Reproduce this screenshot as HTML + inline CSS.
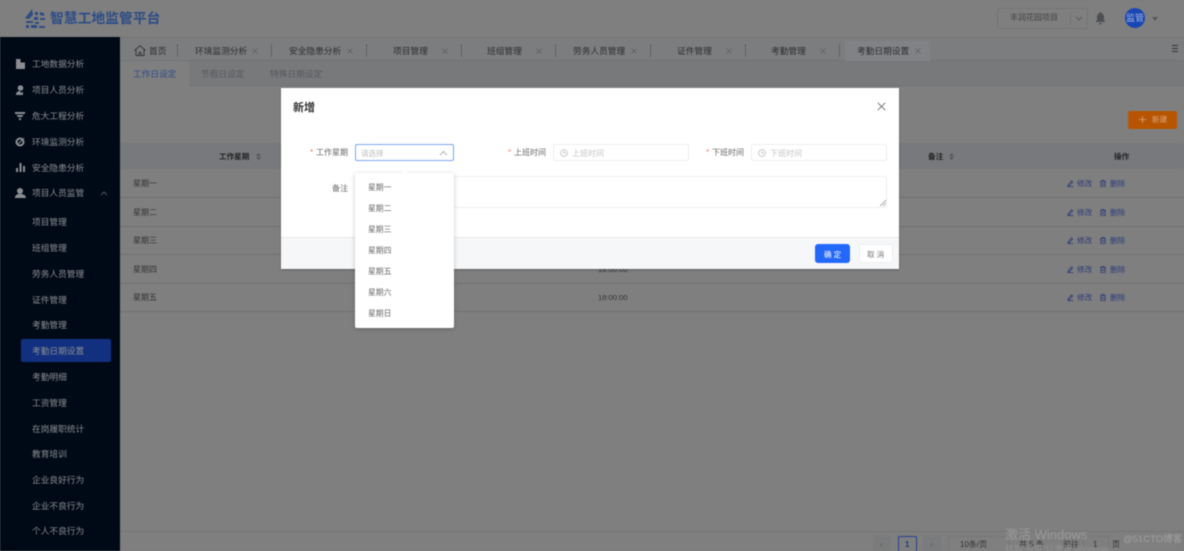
<!DOCTYPE html>
<html lang="zh"><head><meta charset="utf-8"><title>智慧工地监管平台</title>
<style>
html,body{margin:0;padding:0;width:1184px;height:551px;overflow:hidden;background:#7f7f7f}
#p{position:relative;width:1184px;height:551px;overflow:hidden;background:#7f7f7f;font-family:"Liberation Sans","Noto Sans CJK SC",sans-serif;font-size:8.7px;filter:blur(.45px)}
#p div,#p span,#p svg{position:absolute}
.t{white-space:nowrap;line-height:12px;height:12px;margin-top:-6px}
.s{color:#8b8e91;left:32px}
.tab{color:#2e2e2e}
.sep{width:1px;height:13px;top:44px;background:#5f6164}
.r{left:120px;width:1064px;height:1px;background:#6f7072}
.a{color:#2c3a78;font-size:7.6px;margin-top:-5px}
.w{color:#333;left:133px;font-size:8px;margin-top:-5px}
.m{color:#666;font-size:8px;margin-top:-5px}
.d{color:#666;left:368px;font-size:7.8px;margin-top:-5px}
.tm{color:#333;font-size:7.6px;left:598px;margin-top:-5px}
.th{color:#222;font-weight:700;font-size:7.6px;margin-top:-5px}
.ph{margin-top:-5px}
.box{background:#fff;border:1px solid #eceef1;box-sizing:border-box;border-radius:2px}
.cx{top:48px}
.ip{fill:none;stroke:#2c3a78;stroke-width:.8}
</style></head><body><div id="p">
<!-- header -->
<div style="left:0;top:0;width:1184px;height:37px;background:#7f7f7f;border-bottom:1px solid #737475"></div>
<svg style="left:25px;top:9px" width="20" height="20" viewBox="0 0 20 20" fill="#2c4c86"><path d="M0 9 5 3 7 0 8 6 4 10ZM10 3h3v3h-3zM15 3l4 1v3l-4-1zM9 8h4v3H9zM15 9h5v2h-5zM1 12h7v2H1zM10 13h4v2h-4zM1 16h3v3H1zM6 16h6v3H6zM14 17h6v2h-6z"/></svg>
<div class="t" style="left:50px;top:19px;height:18px;line-height:18px;margin-top:-9px;font-size:13.8px;font-weight:700;color:#2c4c86">智慧工地监管平台</div>
<div style="left:997px;top:8px;width:91px;height:21px;box-sizing:border-box;border:1px solid #747576;border-radius:3px"></div>
<div style="left:1070px;top:12px;width:1px;height:13px;background:#747576"></div>
<div class="t" style="left:1010px;top:18px;color:#444;font-size:8px">丰润花园项目</div>
<svg style="left:1075px;top:16px" width="8" height="5" viewBox="0 0 8 5" fill="none" stroke="#5c5c5c"><path d="M1 1l3 3 3-3"/></svg>
<svg style="left:1095px;top:12px" width="11" height="13" viewBox="0 0 11 13" fill="#4d5055"><path d="M5.500 0C6.300 0 6.500.6 6.500 1.200 8.500 1.800 9 3.500 9 5.500V8l1.500 2H.5L2 8V5.500C2 3.500 2.500 1.800 4.500 1.200 4.500.6 4.700 0 5.500 0ZM4 11h3a1.500 1.500 0 0 1-3 0Z"/></svg>
<div style="left:1125px;top:8px;width:20px;height:20px;border-radius:50%;background:#1846b4"></div>
<div class="t" style="left:1126px;top:18px;color:#a9b5d8;font-size:9px">监管</div>
<div style="left:1152px;top:17px;width:0;height:0;border:3px solid transparent;border-top:4px solid #55575a"></div>
<!-- sidebar -->
<div style="left:0;top:37px;width:120px;height:514px;background:#000a17"></div>
<svg style="left:16px;top:59px" width="9" height="10" viewBox="0 0 9 10" fill="#8b8e91"><path d="M0 0h4.500v3.500H9V10H0z"/></svg>
<svg style="left:16px;top:85px" width="9" height="10" viewBox="0 0 9 10" fill="#8b8e91"><circle cx="4.500" cy="3" r="2.800"/><path d="M0 10c0-3 2-4 4-4l1 2 2-1v3z"/></svg>
<svg style="left:15px;top:112px" width="10" height="8" viewBox="0 0 10 8" fill="#8b8e91"><path d="M0 0h10v2H0zM1.500 3h7L7 5H3zM4 6h2v2H4z"/></svg>
<svg style="left:15px;top:137px" width="10" height="10" viewBox="0 0 10 10" fill="none" stroke="#8b8e91" stroke-width="2"><circle cx="5" cy="5" r="3.500"/><path d="M2 8 9 1" stroke-width="1"/></svg>
<svg style="left:16px;top:163px" width="9" height="9" viewBox="0 0 9 9" fill="#8b8e91"><path d="M0 5h2v4H0zM3.500 0h2v9h-2zM7 3h2v6H7z"/></svg>
<svg style="left:15px;top:188px" width="11" height="10" viewBox="0 0 11 10" fill="#8b8e91"><circle cx="5" cy="3" r="3"/><path d="M0 10c0-3 2-4 5-4s6 1 6 4z"/></svg>
<div class="t s" style="top:64px">工地数据分析</div>
<div class="t s" style="top:90px">项目人员分析</div>
<div class="t s" style="top:116px">危大工程分析</div>
<div class="t s" style="top:142px">环境监测分析</div>
<div class="t s" style="top:168px">安全隐患分析</div>
<div class="t s" style="top:193px">项目人员监管</div>
<svg style="left:100px;top:191px" width="8" height="5" viewBox="0 0 8 5" fill="none" stroke="#4c525a"><path d="M1 4l3-3 3 3"/></svg>
<div class="t s" style="top:222px">项目管理</div>
<div class="t s" style="top:248px">班组管理</div>
<div class="t s" style="top:274px">劳务人员管理</div>
<div class="t s" style="top:300px">证件管理</div>
<div class="t s" style="top:325px">考勤管理</div>
<div style="left:21px;top:339px;width:90px;height:23px;background:#12307f;border-radius:2px"></div>
<div class="t s" style="top:351px">考勤日期设置</div>
<div class="t s" style="top:377px">考勤明细</div>
<div class="t s" style="top:403px">工资管理</div>
<div class="t s" style="top:429px">在岗履职统计</div>
<div class="t s" style="top:454px">教育培训</div>
<div class="t s" style="top:480px">企业良好行为</div>
<div class="t s" style="top:506px">企业不良行为</div>
<div class="t s" style="top:531px">个人不良行为</div>
<!-- tabs -->
<div style="left:120px;top:38px;width:1064px;height:23px;background:#7c7d7f;border-bottom:1px solid #727375;box-sizing:border-box"></div>
<div style="left:845px;top:41px;width:85px;height:20px;background:#808286"></div>
<svg style="left:134px;top:45px" width="12" height="11" viewBox="0 0 12 11" fill="none" stroke="#333" stroke-width=".9"><path d="M.5 5.500 6 .7l5.500 4.800M2 4.500v6h8v-6M5 10.500V7.500h2v3"/></svg>
<div class="t tab" style="left:149px;top:51px">首页</div>
<div class="sep" style="left:177px"></div>
<div class="t tab" style="left:195px;top:51px">环境监测分析</div>
<svg class="cx" style="left:252px" width="6" height="6" viewBox="0 0 6 6" stroke="#5c5c5c" stroke-width=".7"><path d="M.5.500l5 5M5.500.500l-5 5"/></svg>
<div class="sep" style="left:271px"></div>
<div class="t tab" style="left:289px;top:51px">安全隐患分析</div>
<svg class="cx" style="left:347px" width="6" height="6" viewBox="0 0 6 6" stroke="#5c5c5c" stroke-width=".7"><path d="M.5.500l5 5M5.500.500l-5 5"/></svg>
<div class="sep" style="left:366px"></div>
<div class="t tab" style="left:393px;top:51px">项目管理</div>
<svg class="cx" style="left:442px" width="6" height="6" viewBox="0 0 6 6" stroke="#5c5c5c" stroke-width=".7"><path d="M.5.500l5 5M5.500.500l-5 5"/></svg>
<div class="sep" style="left:461px"></div>
<div class="t tab" style="left:487px;top:51px">班组管理</div>
<svg class="cx" style="left:536px" width="6" height="6" viewBox="0 0 6 6" stroke="#5c5c5c" stroke-width=".7"><path d="M.5.500l5 5M5.500.500l-5 5"/></svg>
<div class="sep" style="left:555px"></div>
<div class="t tab" style="left:573px;top:51px">劳务人员管理</div>
<svg class="cx" style="left:631px" width="6" height="6" viewBox="0 0 6 6" stroke="#5c5c5c" stroke-width=".7"><path d="M.5.500l5 5M5.500.500l-5 5"/></svg>
<div class="sep" style="left:650px"></div>
<div class="t tab" style="left:677px;top:51px">证件管理</div>
<svg class="cx" style="left:726px" width="6" height="6" viewBox="0 0 6 6" stroke="#5c5c5c" stroke-width=".7"><path d="M.5.500l5 5M5.500.500l-5 5"/></svg>
<div class="sep" style="left:745px"></div>
<div class="t tab" style="left:771px;top:51px">考勤管理</div>
<svg class="cx" style="left:820px" width="6" height="6" viewBox="0 0 6 6" stroke="#5c5c5c" stroke-width=".7"><path d="M.5.500l5 5M5.500.500l-5 5"/></svg>
<div class="sep" style="left:839px"></div>
<div class="t tab" style="left:857px;top:51px">考勤日期设置</div>
<svg class="cx" style="left:915px" width="6" height="6" viewBox="0 0 6 6" stroke="#5c5c5c" stroke-width=".7"><path d="M.5.500l5 5M5.500.500l-5 5"/></svg>
<div style="left:1172px;top:45px;width:6px;height:5px;border-top:1px solid #333;border-bottom:1px solid #333"></div>
<div style="left:1172px;top:48px;width:6px;height:1px;background:#333"></div>
<!-- sub tabs -->
<div style="left:120px;top:61px;width:1064px;height:25px;background:#78797b;border-bottom:1px solid #727375;box-sizing:border-box"></div>
<div style="left:120px;top:61px;width:69px;height:25px;background:#7f7f7f"></div>
<div class="t" style="left:133px;top:74px;color:#2f4a8c">工作日设定</div>
<div class="t" style="left:201px;top:74px;color:#55585c">节假日设定</div>
<div class="t" style="left:270px;top:74px;color:#55585c">特殊日期设定</div>
<!-- new btn -->
<div style="left:1128px;top:111px;width:49px;height:18px;background:#b85502;border-radius:2px"></div>
<svg style="left:1139px;top:116px" width="7" height="7" viewBox="0 0 7 7" stroke="#dba77d" stroke-width=".8"><path d="M3.500 0v7M0 3.500h7"/></svg>
<div class="t" style="left:1152px;top:120px;color:#dba77d;font-size:7.6px">新建</div>
<!-- table -->
<div style="left:120px;top:143px;width:1064px;height:26px;background:#77797c"></div>
<div class="t th" style="left:219px;top:156px">工作星期</div>
<div class="t th" style="left:928px;top:156px">备注</div>
<div class="t th" style="left:1114px;top:156px">操作</div>
<svg style="left:256px;top:153px" width="5" height="7" viewBox="0 0 5 7" fill="#55585b"><path d="M2.500 0 5 3H0zM0 4h5L2.500 7z"/></svg>
<svg style="left:949px;top:153px" width="5" height="7" viewBox="0 0 5 7" fill="#55585b"><path d="M2.500 0 5 3H0zM0 4h5L2.500 7z"/></svg>
<div class="r" style="top:197px"></div><div class="r" style="top:226px"></div><div class="r" style="top:254px"></div><div class="r" style="top:283px"></div><div class="r" style="top:311px"></div>
<div class="t w" style="top:183px">星期一</div>
<div class="t w" style="top:212px">星期二</div>
<div class="t w" style="top:240px">星期三</div>
<div class="t w" style="top:269px">星期四</div>
<div class="t w" style="top:297px">星期五</div>
<div class="t tm" style="top:269px">18:00:00</div>
<div class="t tm" style="top:297px">18:00:00</div>
<svg style="left:1067px;top:180px" width="7" height="7" viewBox="0 0 7 7"><path class="ip" d="M1 5 4.500.8l1.200 1L2.200 6 .9 6.300zM.5 6.700h6"/></svg><div class="t a" style="left:1077px;top:183px">修改</div>
<svg style="left:1100px;top:180px" width="6" height="7" viewBox="0 0 6 7"><path class="ip" d="M.8 1.500h4.400v5H.8zM0 1.500h6M2 1.500V.4h2v1.100M2.300 3v2M3.700 3v2"/></svg><div class="t a" style="left:1110px;top:183px">删除</div>
<svg style="left:1067px;top:209px" width="7" height="7" viewBox="0 0 7 7"><path class="ip" d="M1 5 4.500.8l1.200 1L2.200 6 .9 6.300zM.5 6.700h6"/></svg><div class="t a" style="left:1077px;top:212px">修改</div>
<svg style="left:1100px;top:209px" width="6" height="7" viewBox="0 0 6 7"><path class="ip" d="M.8 1.500h4.400v5H.8zM0 1.500h6M2 1.500V.4h2v1.100M2.300 3v2M3.700 3v2"/></svg><div class="t a" style="left:1110px;top:212px">删除</div>
<svg style="left:1067px;top:237px" width="7" height="7" viewBox="0 0 7 7"><path class="ip" d="M1 5 4.500.8l1.200 1L2.200 6 .9 6.300zM.5 6.700h6"/></svg><div class="t a" style="left:1077px;top:240px">修改</div>
<svg style="left:1100px;top:237px" width="6" height="7" viewBox="0 0 6 7"><path class="ip" d="M.8 1.500h4.400v5H.8zM0 1.500h6M2 1.500V.4h2v1.100M2.300 3v2M3.700 3v2"/></svg><div class="t a" style="left:1110px;top:240px">删除</div>
<svg style="left:1067px;top:266px" width="7" height="7" viewBox="0 0 7 7"><path class="ip" d="M1 5 4.500.8l1.200 1L2.200 6 .9 6.300zM.5 6.700h6"/></svg><div class="t a" style="left:1077px;top:269px">修改</div>
<svg style="left:1100px;top:266px" width="6" height="7" viewBox="0 0 6 7"><path class="ip" d="M.8 1.500h4.400v5H.8zM0 1.500h6M2 1.500V.4h2v1.100M2.300 3v2M3.700 3v2"/></svg><div class="t a" style="left:1110px;top:269px">删除</div>
<svg style="left:1067px;top:294px" width="7" height="7" viewBox="0 0 7 7"><path class="ip" d="M1 5 4.500.8l1.200 1L2.200 6 .9 6.300zM.5 6.700h6"/></svg><div class="t a" style="left:1077px;top:297px">修改</div>
<svg style="left:1100px;top:294px" width="6" height="7" viewBox="0 0 6 7"><path class="ip" d="M.8 1.500h4.400v5H.8zM0 1.500h6M2 1.500V.4h2v1.100M2.300 3v2M3.700 3v2"/></svg><div class="t a" style="left:1110px;top:297px">删除</div>
<!-- pagination -->
<div class="r" style="top:531px;background:#737475"></div>
<div style="left:873px;top:536px;width:18px;height:15px;background:#7a7b7c"></div>
<div class="t" style="left:880px;top:544px;color:#5b5b5b">‹</div>
<div style="left:898px;top:536px;width:19px;height:16px;border:1px solid #26428f;box-sizing:border-box;border-radius:2px"></div>
<div class="t" style="left:905px;top:545px;color:#1f3c8c;font-weight:700;font-size:8px">1</div>
<div style="left:923px;top:536px;width:18px;height:15px;background:#7a7b7c"></div>
<div class="t" style="left:930px;top:544px;color:#5b5b5b">›</div>
<div style="left:948px;top:536px;width:62px;height:16px;border:1px solid #757677;box-sizing:border-box"></div>
<div class="t" style="left:960px;top:545px;color:#333;font-size:8px">10条/页</div>
<div class="t" style="left:1019px;top:545px;color:#333;font-size:8px">共 5 条</div>
<div class="t" style="left:1063px;top:545px;color:#333;font-size:8px">前往</div>
<div style="left:1083px;top:536px;width:26px;height:16px;border:1px solid #757677;box-sizing:border-box"></div>
<div class="t" style="left:1093px;top:545px;color:#333;font-size:8px">1</div>
<div class="t" style="left:1112px;top:545px;color:#333;font-size:8px">页</div>
<div class="t" style="left:1005px;top:534px;color:#9a9a9a;font-size:13px;line-height:14px">激活 Windows</div>
<div class="t" style="left:1005px;top:549px;color:#949494">转到“设置”以激活 Windows。</div>
<div class="t" style="left:1123px;top:540px;color:#a0a0a0;font-size:9.500px">@51CTO博客</div>
<!-- modal -->
<div style="left:281px;top:88px;width:618px;height:181px;background:#fff;box-shadow:0 1px 2px rgba(0,0,0,.25)"></div>
<div class="t" style="left:293px;top:108px;color:#333;font-size:11px;font-weight:700;height:14px;line-height:14px;margin-top:-7px">新增</div>
<svg style="left:877px;top:102px" width="9" height="9" viewBox="0 0 9 9" stroke="#777" stroke-width="1"><path d="M.8.800l7.400 7.400M8.200.800.800 8.200"/></svg>
<div class="t ph" style="left:310px;top:152px;color:#f27a7a;font-size:8px">*</div>
<div class="t m" style="left:316px;top:152px">工作星期</div>
<div class="box" style="left:355px;top:144px;width:99px;height:17px;border-color:#7ea6f5"></div>
<div class="t ph" style="left:361px;top:153px;color:#bbb;font-size:7.500px">请选择</div>
<svg style="left:439px;top:150px" width="9" height="6" viewBox="0 0 9 6" fill="none" stroke="#b5b5b5"><path d="M1 5l3.500-3.500L8 5"/></svg>
<div class="t ph" style="left:508px;top:152px;color:#f27a7a;font-size:8px">*</div>
<div class="t m" style="left:514px;top:152px">上班时间</div>
<div class="box" style="left:553px;top:144px;width:136px;height:17px"></div>
<svg style="left:560px;top:149px" width="8" height="8" viewBox="0 0 8 8" fill="none" stroke="#bbb" stroke-width=".8"><circle cx="4" cy="4" r="3.400"/><path d="M4 2v2.200h1.800"/></svg>
<div class="t ph" style="left:572px;top:153px;color:#c4c4c4;font-size:8px">上班时间</div>
<div class="t ph" style="left:706px;top:152px;color:#f27a7a;font-size:8px">*</div>
<div class="t m" style="left:712px;top:152px">下班时间</div>
<div class="box" style="left:751px;top:144px;width:136px;height:17px"></div>
<svg style="left:758px;top:149px" width="8" height="8" viewBox="0 0 8 8" fill="none" stroke="#bbb" stroke-width=".8"><circle cx="4" cy="4" r="3.400"/><path d="M4 2v2.200h1.800"/></svg>
<div class="t ph" style="left:770px;top:153px;color:#c4c4c4;font-size:8px">下班时间</div>
<div class="t m" style="left:332px;top:188px">备注</div>
<div class="box" style="left:355px;top:176px;width:532px;height:32px"></div>
<svg style="left:880px;top:200px" width="6" height="6" viewBox="0 0 6 6" stroke="#888" stroke-width=".7"><path d="M0 6 6 0M3 6l3-3"/></svg>
<div style="left:281px;top:237px;width:618px;height:32px;background:#f6f7f9;border-top:1px solid #e8e9ec;box-sizing:border-box"></div>
<div style="left:815px;top:244px;width:35px;height:19px;background:#2468fa;border-radius:3px"></div>
<div class="t ph" style="left:824px;top:254px;color:#fff;letter-spacing:2px;font-size:7.600px">确定</div>
<div class="box" style="left:859px;top:244px;width:34px;height:19px"></div>
<div class="t ph" style="left:867px;top:254px;color:#777;letter-spacing:2px;font-size:7.600px">取消</div>
<!-- dropdown -->
<div style="left:355px;top:173px;width:99px;height:155px;background:#fff;border-radius:2px;box-shadow:0 1px 5px rgba(0,0,0,.22)"></div>
<div style="left:402px;top:170px;width:0;height:0;border:3px solid transparent;border-top:0;border-bottom:3px solid #fff"></div>
<div class="t d" style="top:187px">星期一</div>
<div class="t d" style="top:208px">星期二</div>
<div class="t d" style="top:229px">星期三</div>
<div class="t d" style="top:250px">星期四</div>
<div class="t d" style="top:271px">星期五</div>
<div class="t d" style="top:292px">星期六</div>
<div class="t d" style="top:313px">星期日</div>
</div></body></html>
